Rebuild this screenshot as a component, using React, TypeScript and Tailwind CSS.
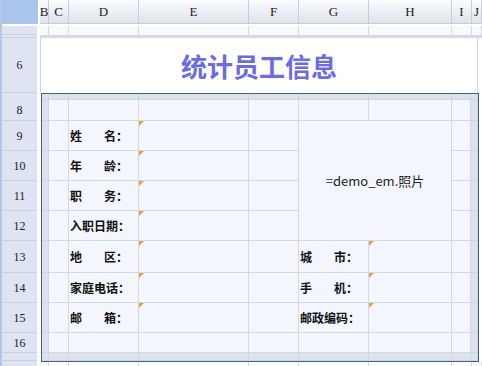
const headCols = [
  { label: 'B', w: 'w-[9px]' },
  { label: 'C', w: 'w-[20px]' },
  { label: 'D', w: 'w-[70px]' },
  { label: 'E', w: 'w-[110px]' },
  { label: 'F', w: 'w-[50px]' },
  { label: 'G', w: 'w-[70px]' },
  { label: 'H', w: 'w-[83px]' },
  { label: 'I', w: 'w-[20px]' },
  { label: 'J', w: 'w-[10px]' },
]

const rowHeads = [
  { label: '', h: 'h-[9px]' },
  { label: '', h: 'h-[3px] bg-[#d5dbe6]' },
  { label: '6', h: 'h-[55px]' },
  { label: '8', h: 'h-[28px] pt-[6px]' },
  { label: '9', h: 'h-[30px]' },
  { label: '10', h: 'h-[30px]' },
  { label: '11', h: 'h-[30px]' },
  { label: '12', h: 'h-[30px]' },
  { label: '13', h: 'h-[32px]' },
  { label: '14', h: 'h-[30px]' },
  { label: '15', h: 'h-[30px]' },
  { label: '16', h: 'h-[20px]' },
  { label: '', h: 'h-[8px]' },
  { label: '', h: 'h-[10px]' },
]

// 11 rows x 9 cols inside the frame; row 0/10 and col 0/8 are the grey band
const labels: Record<string, [string, string]> = {
  '2-2': ['姓', '名：'],
  '3-2': ['年', '龄：'],
  '4-2': ['职', '务：'],
  '5-2': ['入职日期：', ''],
  '6-2': ['地', '区：'],
  '7-2': ['家庭电话：', ''],
  '8-2': ['邮', '箱：'],
  '6-5': ['城', '市：'],
  '7-5': ['手', '机：'],
  '8-5': ['邮政编码：', ''],
}

const marked = new Set(['2-3', '3-3', '4-3', '5-3', '6-3', '7-3', '8-3', '6-6', '7-6', '8-6'])

function Marker() {
  return <span className="absolute left-0 top-0 h-0 w-0 border-t-[5px] border-r-[5px] border-t-[#e6a13a] border-r-transparent" />
}

function Label({ parts }: { parts: [string, string] }) {
  return (
    <div className="flex h-full w-[59px] items-center justify-between whitespace-nowrap pl-[1px] text-[12px] font-bold text-[#111]">
      <span>{parts[0]}</span>
      {parts[1] && <span>{parts[1]}</span>}
    </div>
  )
}

function FrameGrid() {
  const cells = []
  for (let r = 0; r < 11; r++) {
    for (let c = 0; c < 9; c++) {
      const key = `${r}-${c}`
      if (r >= 2 && r <= 5 && (c === 5 || c === 6)) {
        if (r === 2 && c === 5) {
          cells.push(
            <div key={key} className="col-span-2 row-span-4 flex items-center justify-center border-r border-b border-[#d3d8e2] bg-[#f3f6fd] text-[13px] text-[#222]">
              =demo_em.照片
            </div>
          )
        }
        continue
      }
      const band = r === 0 || r === 10 || c === 0 || c === 8
      cells.push(
        <div
          key={key}
          className={
            band
              ? 'border-r border-b border-[#d0d6e1] bg-[#dce2ee]'
              : 'relative border-r border-b border-[#d3d8e2] bg-[#f3f6fd]'
          }
        >
          {marked.has(key) && <Marker />}
          {labels[key] && <Label parts={labels[key]} />}
        </div>
      )
    }
  }
  return (
    <div className="ml-[1px] w-[438px] border border-[#42607f]">
      <div className="grid grid-cols-[7px_20px_70px_110px_50px_70px_83px_19px_7px] grid-rows-[6px_21px_30px_30px_30px_30px_32px_30px_30px_20px_8px]">
        {cells}
      </div>
    </div>
  )
}

export default function App() {
  return (
    <div className="flex h-[366px] w-[482px] overflow-hidden bg-white font-['Noto_Sans_CJK_SC',sans-serif]">
      <div className="flex w-[40px] shrink-0 flex-col border-l-2 border-[#b3c8e8] bg-white">
        <div className="h-[24px] w-[36px] shrink-0 bg-[#a9c5ec]" />
        <div className="h-[2px] shrink-0" />
        {rowHeads.map((row, i) => (
          <div
            key={i}
            className={`flex w-[35px] shrink-0 items-center justify-center border-b border-[#c9d1e2] bg-[#dee4f2] font-['Liberation_Serif',serif] text-[12px] text-[#222] ${row.h}`}
          >
            {row.label}
          </div>
        ))}
      </div>

      <div className="flex w-[442px] flex-col">
        <div className="flex h-[24px] shrink-0 border-b border-[#c9ced9]">
          {headCols.map((col) => (
            <div
              key={col.label}
              className={`flex shrink-0 items-center justify-center overflow-hidden border-r border-[#c8cdd8] bg-linear-to-b from-[#fafbfd] to-[#dde2ec] font-['Liberation_Serif',serif] text-[13px] text-[#222] ${col.w}`}
            >
              {col.label}
            </div>
          ))}
        </div>
        <div className="h-[2px] shrink-0" />
        <div className="flex h-[9px] shrink-0">
          {headCols.map((col) => (
            <div key={col.label} className={`shrink-0 border-r border-[#d3d8e2] bg-[#f8f9fc] ${col.w}`} />
          ))}
        </div>
        <div className="h-[3px] shrink-0 bg-[#d5dbe6]" />
        <div className="flex h-[55px] shrink-0">
          <div className="flex w-[438px] items-center justify-center border-x border-[#cfd4de] bg-white text-[26px] font-bold text-[#6b6be3]">
            统计员工信息
          </div>
        </div>
        <FrameGrid />
        <div className="flex h-[10px] shrink-0">
          {headCols.map((col) => (
            <div key={col.label} className={`shrink-0 border-r border-[#d3d8e2] bg-white ${col.w}`} />
          ))}
        </div>
      </div>
    </div>
  )
}
